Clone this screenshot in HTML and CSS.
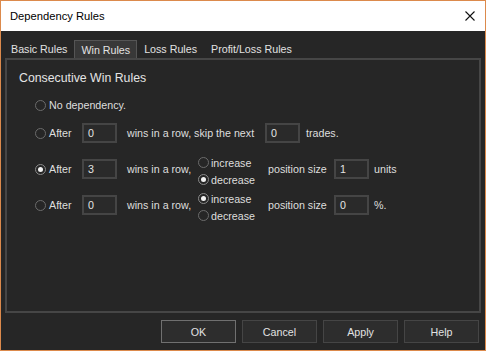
FILE: index.html
```
<!DOCTYPE html>
<html lang="en">
<head>
    <meta charset="UTF-8">
    <title>Dependency Rules</title>
    <link rel="stylesheet" href="styles.css">
</head>
<body>
    <div class="window">
        <div class="titlebar">
            <span class="title">Dependency Rules</span>
            <svg class="close" width="10" height="10" viewBox="0 0 10 10">
                <path d="M0.5 0.5 L9.5 9.5 M9.5 0.5 L0.5 9.5" stroke="#111" stroke-width="1.1" fill="none"/>
            </svg>
        </div>

        <div class="client">
            <div class="tabs">
                <div class="tab">Basic Rules</div>
                <div class="tab active">Win Rules</div>
                <div class="tab">Loss Rules</div>
                <div class="tab">Profit/Loss Rules</div>
            </div>

            <div class="panel">
                <div class="group-title">Consecutive Win Rules</div>

                <div class="rule rule-first">
                    <span class="radio"></span>
                    <span class="label">No dependency.</span>
                </div>

                <div class="rule rule-skip">
                    <div class="lead"><span class="radio"></span><span class="label">After</span></div>
                    <div class="field">0</div>
                    <span class="txt txt-skip">wins in a row, skip the next</span>
                    <div class="field">0</div>
                    <span class="tail">trades.</span>
                </div>

                <div class="rule rule-tall">
                    <div class="lead"><span class="radio checked"></span><span class="label">After</span></div>
                    <div class="field">3</div>
                    <span class="txt txt-wins">wins in a row,</span>
                    <div class="choice">
                        <div class="opt"><span class="radio"></span><span class="label">increase</span></div>
                        <div class="opt"><span class="radio checked"></span><span class="label">decrease</span></div>
                    </div>
                    <span class="txt txt-pos">position size</span>
                    <div class="field">1</div>
                    <span class="tail tail-wide">units</span>
                </div>

                <div class="rule rule-tall rule-last">
                    <div class="lead"><span class="radio"></span><span class="label">After</span></div>
                    <div class="field">0</div>
                    <span class="txt txt-wins">wins in a row,</span>
                    <div class="choice">
                        <div class="opt"><span class="radio checked"></span><span class="label">increase</span></div>
                        <div class="opt"><span class="radio"></span><span class="label">decrease</span></div>
                    </div>
                    <span class="txt txt-pos">position size</span>
                    <div class="field">0</div>
                    <span class="tail tail-wide">%.</span>
                </div>
            </div>

            <div class="buttons">
                <button class="btn default">OK</button>
                <button class="btn">Cancel</button>
                <button class="btn">Apply</button>
                <button class="btn">Help</button>
            </div>
        </div>
    </div>
</body>
</html>
```

FILE: styles.css
```
* {
    margin: 0;
    padding: 0;
    box-sizing: border-box;
}

body {
    font-family: "Liberation Sans", Arial, sans-serif;
    font-size: 10.7px;
    background: #262626;
    color: #dedede;
}

.window {
    width: 486px;
    height: 351px;
    border: 1px solid #dc8a4c;
    display: flex;
    flex-direction: column;
    background: #262626;
}

.titlebar {
    height: 30px;
    background: #ffffff;
    display: flex;
    align-items: center;
    padding: 0 10px 0 9px;
}

.titlebar .title {
    font-size: 11.2px;
    color: #000;
    padding-bottom: 1px;
}

.titlebar .close {
    margin-left: auto;
    margin-bottom: 1px;
}

.client {
    flex: 1;
    display: flex;
    flex-direction: column;
    padding-top: 9px;
}

/* tab strip */
.tabs {
    display: flex;
    height: 18px;
    padding-left: 3px;
}

.tab {
    padding: 0 7px;
    line-height: 18px;
    color: #e2e2e2;
}

.tab.active {
    padding: 1px 6px 0;
    line-height: 17px;
    background: #383838;
    border: 1px solid #555;
    border-bottom: none;
}

.panel {
    height: 255px;
    margin: 0 4px;
    border: 2px solid #464646;
    padding: 10px 0 0 0;
}

.group-title {
    font-size: 12.3px;
    line-height: 16px;
    padding-left: 12px;
    color: #e4e4e4;
}

/* rule rows */
.rule {
    display: flex;
    align-items: center;
    padding-left: 28px;
    height: 20px;
}

.rule-first {
    margin-top: 9px;
}

.rule-skip {
    margin-top: 8px;
}

.rule-tall {
    height: 34px;
    margin-top: 9px;
}

.rule-last {
    margin-top: 2px;
}

.radio {
    width: 11px;
    height: 11px;
    border: 1px solid #6c6c6c;
    border-radius: 50%;
    background: #262626;
    display: flex;
    align-items: center;
    justify-content: center;
    flex-shrink: 0;
}

.radio.checked {
    border-color: #8a8a8a;
}

.radio.checked::after {
    content: "";
    width: 5px;
    height: 5px;
    border-radius: 50%;
    background: #f2f2f2;
}

.label {
    margin-left: 3px;
}

.lead {
    width: 47px;
    display: flex;
    align-items: center;
}

.field {
    width: 35px;
    height: 20px;
    border: 2px solid #454545;
    background: #2a2a2a;
    padding-left: 4px;
    line-height: 16px;
    color: #e4e4e4;
    flex-shrink: 0;
}

.txt {
    margin-left: 10px;
    white-space: nowrap;
}

.txt-skip {
    width: 138px;
}

.txt-wins {
    width: 71px;
}

.txt-pos {
    width: 66px;
    margin-left: 0;
}

.tail {
    margin-left: 6px;
}

.tail.tail-wide {
    margin-left: 5px;
}

.choice {
    width: 70px;
    align-self: flex-start;
    margin-top: 2px;
    display: flex;
    flex-direction: column;
}

.opt {
    height: 17px;
    display: flex;
    align-items: center;
}

.opt .label {
    margin-left: 2px;
}

/* dialog buttons */
.buttons {
    display: flex;
    justify-content: flex-end;
    gap: 6px;
    padding-right: 6px;
    margin-top: 7px;
}

.btn {
    width: 75px;
    height: 23px;
    background: #2d2d2d;
    border: 1px solid #454545;
    color: #e2e2e2;
    font-family: "Liberation Sans", Arial, sans-serif;
    font-size: 10.7px;
}

.btn.default {
    border-color: #707070;
}
```
